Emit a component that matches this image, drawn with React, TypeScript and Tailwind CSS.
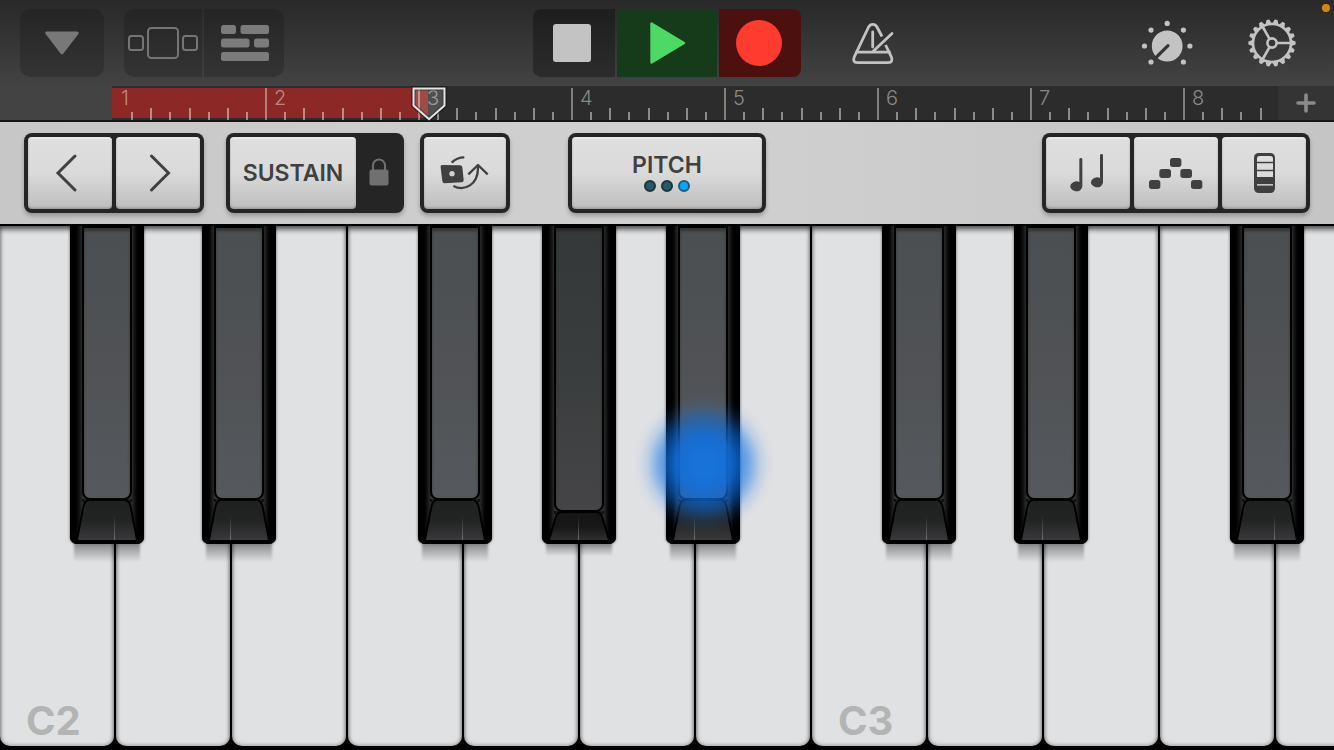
import type { ReactNode } from "react";
import clsx from "clsx";

type BlackKey = {
  label: string;
  position: string;
  seam: number;
  pressed?: boolean;
  touched?: boolean;
};

type PianoKey = {
  note: string;
  caption?: string;
  black?: BlackKey;
};

const bars = [1, 2, 3, 4, 5, 6, 7, 8];
const ticks = [0, 1, 2, 3, 4, 5, 6, 7];

const pianoKeys: PianoKey[] = [
  { note: "C2", caption: "C2", black: { label: "C#2", position: "left-[60%]", seam: 45 } },
  { note: "D2", black: { label: "D#2", position: "left-[74%]", seam: 29 } },
  { note: "E2" },
  { note: "F2", black: { label: "F#2", position: "left-[60%]", seam: 45 } },
  { note: "G2", black: { label: "G#2", position: "left-[67%]", seam: 37, pressed: true } },
  { note: "A2", black: { label: "A#2", position: "left-[74%]", seam: 29, touched: true } },
  { note: "B2" },
  { note: "C3", caption: "C3", black: { label: "C#3", position: "left-[60%]", seam: 45 } },
  { note: "D3", black: { label: "D#3", position: "left-[74%]", seam: 29 } },
  { note: "E3" },
  { note: "F3", black: { label: "F#3", position: "left-[60%]", seam: 45 } },
  { note: "G3" },
];

export default function App() {
  return (
    <div className="flex min-h-screen flex-col overflow-hidden bg-black font-['Inter','Liberation_Sans',sans-serif] select-none">
      <TopBar />
      <Ruler />
      <ControlBar />
      <Keyboard />
    </div>
  );
}

function TopBar() {
  return (
    <header className="relative grid grid-cols-[1fr_auto_1fr] items-center bg-linear-to-b from-[#292929] to-[#434343] py-[9px]">
      <div className="flex gap-5 pl-5">
        <button
          aria-label="Song menu"
          className="flex h-17 w-21 items-center justify-center rounded-[10px] bg-linear-to-b from-[#252525] to-[#343434]"
        >
          <svg width="36" height="26" viewBox="0 0 36 26" className="fill-[#787878] stroke-[#787878]">
            <path d="M2.8 3h30.4L18 22.8z" strokeWidth="3" strokeLinejoin="round" />
          </svg>
        </button>
        <div className="flex gap-0.5 overflow-hidden rounded-[10px]">
          <button
            aria-label="Browser"
            className="flex h-17 w-[78px] items-center justify-center bg-linear-to-b from-[#252525] to-[#343434]"
          >
            <svg width="70" height="32" viewBox="0 0 70 32" fill="none" className="stroke-[#757575]" strokeWidth="2">
              <rect x="1" y="9" width="14" height="14" rx="2.5" />
              <rect x="20" y="1" width="30" height="30" rx="3.5" />
              <rect x="55" y="9" width="14" height="14" rx="2.5" />
            </svg>
          </button>
          <button
            aria-label="Tracks"
            className="flex h-17 w-20 items-center justify-center bg-linear-to-b from-[#252525] to-[#343434]"
          >
            <svg width="50" height="36" viewBox="-2 0 50 36" className="fill-[#7b7b7b]">
              <rect width="15" height="9" rx="2.5" />
              <rect x="19.5" width="28.5" height="9" rx="2.5" />
              <rect y="13.5" width="28.5" height="9" rx="2.5" />
              <rect x="33" y="13.5" width="15" height="9" rx="2.5" />
              <rect y="27" width="48" height="9" rx="2.5" />
            </svg>
          </button>
        </div>
      </div>

      {/* Transport */}
      <div className="flex gap-0.5 overflow-hidden rounded-[8px]">
        <button
          aria-label="Stop"
          className="flex h-17 w-[82px] items-center justify-center bg-linear-to-b from-[#1e1e1e] to-[#2c2c2c]"
        >
          <span className="mr-1 size-[38px] rounded-[3px] bg-[#c3c3c3]" />
        </button>
        <button aria-label="Play" className="flex h-17 w-25 items-center justify-center bg-[#163b1b]">
          <svg width="38" height="44" viewBox="0 0 38 44" className="fill-[#4cd964] stroke-[#4cd964]">
            <path d="M3.5 2.5v39L36 22z" strokeWidth="2.4" strokeLinejoin="round" />
          </svg>
        </button>
        <button aria-label="Record" className="flex h-17 w-[82px] items-center justify-center bg-[#4c110f] pr-0.5">
          <span className="size-[46px] rounded-full bg-[#ff3b30]" />
        </button>
      </div>

      <div className="flex items-center pr-[37px] pl-[50px]">
        <button aria-label="Metronome">
          <MetronomeIcon />
        </button>
        <button aria-label="Track controls" className="mr-[54px] ml-auto">
          <KnobIcon />
        </button>
        <button aria-label="Settings">
          <GearIcon />
        </button>
      </div>

      {/* Microphone-in-use light */}
      <span className="absolute top-1 right-1 size-2 rounded-full bg-[#d6860f]" />
    </header>
  );
}

function MetronomeIcon() {
  return (
    <svg
      width="44"
      height="44"
      viewBox="0 0 44 44"
      fill="none"
      className="stroke-[#c3c3c3]"
      strokeWidth="2.8"
      strokeLinecap="round"
      strokeLinejoin="round"
    >
      <path
        strokeLinecap="butt"
        d="M31 15.5 26 6Q24.6 3.4 21.8 3.4T17.6 6L3.4 35.6Q1 41.6 6.4 41.6H37.2Q42.6 41.6 40.2 35.6L34.6 24"
      />
      <path d="M5.5 31.2H38.5M21.7 10.8V26M22 30.6 41 12.4" />
    </svg>
  );
}

function KnobIcon() {
  return (
    <svg width="52" height="48" viewBox="0 0 52 48" className="fill-[#c3c3c3]">
      <circle cx="26.2" cy="27" r="15.4" />
      <path d="M27 26.6 14.5 39" className="stroke-[#363636]" strokeWidth="3.2" strokeLinecap="round" />
      <circle cx="26.2" cy="4.4" r="2.6" />
      <circle cx="10" cy="11.1" r="2.6" />
      <circle cx="42.4" cy="11.1" r="2.6" />
      <circle cx="3.5" cy="27" r="2.6" />
      <circle cx="48.9" cy="27" r="2.6" />
      <circle cx="10" cy="43" r="2.6" />
      <circle cx="42.4" cy="43" r="2.6" />
    </svg>
  );
}

function GearIcon() {
  const teeth = Array.from({ length: 18 }, (_, i) => i * 20);
  return (
    <svg width="50" height="50" viewBox="-25 -25 50 50" fill="none" className="stroke-[#c3c3c3]" strokeWidth="2.6">
      <circle r="19" />
      <circle r="4.6" />
      <path d="M5 0H19M-2.6 -4.4-9.5 -16.5M-2.6 4.4-9.5 16.5" />
      {teeth.map((angle) => (
        <path
          key={angle}
          d="M19.6 -3 23.6 -1.4V1.4L19.6 3z"
          transform={`rotate(${angle})`}
          className="fill-[#c3c3c3] stroke-none"
        />
      ))}
    </svg>
  );
}

function Ruler() {
  return (
    <div className="flex h-9 border-b-2 border-[#161616] bg-[#434343] pl-28">
      <div className="relative min-w-0 flex-1 bg-[#2c2c2c]">
        <div className="absolute top-0.5 left-0 h-[30px] w-[316px] bg-[#8c2825]" />
        <div className="relative flex h-full overflow-hidden pt-0.5">
          {bars.map((bar) => (
            <div key={bar} className="relative flex w-[153px] shrink-0 items-end">
              <span className="absolute -top-0.5 left-[9px] text-xl leading-6 font-light text-white/45">{bar}</span>
              {ticks.map((tick) => (
                <span key={tick} className="flex h-full flex-1 items-end">
                  <span
                    className={clsx(
                      "w-0.5",
                      tick === 0 && bar > 1 && "h-full bg-white/40",
                      tick % 2 === 1 && "h-2 bg-white/45",
                      tick > 0 && tick % 2 === 0 && "h-3 bg-white/45",
                    )}
                  />
                </span>
              ))}
            </div>
          ))}
        </div>
        {/* Playhead */}
        <svg width="38" height="36" viewBox="0 0 38 36" className="absolute top-0 left-[298px]">
          <path d="M3.5 2.5h31v17L19 33.2 3.5 19.5z" fill="none" stroke="#111" strokeOpacity=".6" strokeWidth="4.5" />
          <path d="M3.5 2.5h31v17L19 33.2 3.5 19.5z" fill="#fff" fillOpacity=".17" stroke="#e4e4e4" strokeWidth="2" />
        </svg>
      </div>
      <button aria-label="Song sections" className="flex w-14 items-center justify-center bg-[#343434]">
        <svg width="20" height="20" viewBox="0 0 20 20" className="stroke-[#8a8a8a]" strokeWidth="3.6" strokeLinecap="round">
          <path d="M10 2v16M2 10h16" />
        </svg>
      </button>
    </div>
  );
}

function ButtonFrame({ children }: { children: ReactNode }) {
  return (
    <div className="flex gap-1 rounded-[8px] bg-[#252525] p-1 shadow-[0_3px_4px_rgba(0,0,0,0.25)]">{children}</div>
  );
}

function CapButton({ label, width, children }: { label?: string; width: string; children: ReactNode }) {
  return (
    <button
      aria-label={label}
      className={clsx(
        "flex h-18 flex-col items-center justify-center gap-1 rounded-[4px] bg-linear-to-b from-[#dfdfdf] via-[#dadada] to-[#bebebe] text-[23px] leading-[22px] font-semibold text-[#404040] shadow-[inset_0_2px_1px_rgba(255,255,255,0.45),inset_0_-2px_2px_rgba(0,0,0,0.12),inset_0_0_2px_rgba(0,0,0,0.2)]",
        width,
      )}
    >
      {children}
    </button>
  );
}

function ControlBar() {
  return (
    <div className="flex items-center bg-linear-to-r from-[#c7c7c7] via-[#d1d1d1] to-[#c5c5c5] py-[11px]">
      <div className="flex flex-1 pl-6">
        <ButtonFrame>
          <CapButton label="Octave down" width="w-21">
            <svg width="32" height="40" viewBox="0 0 32 40" fill="none" stroke="currentColor" strokeWidth="3">
              <path d="M21 3 4 20l17 17" strokeLinecap="round" />
            </svg>
          </CapButton>
          <CapButton label="Octave up" width="w-21">
            <svg width="32" height="40" viewBox="0 0 32 40" fill="none" stroke="currentColor" strokeWidth="3">
              <path d="M9.500 3 26.500 20l-17 17" strokeLinecap="round" />
            </svg>
          </CapButton>
        </ButtonFrame>

        <div className="mr-4 ml-[22px]">
          <ButtonFrame>
            <CapButton width="w-[126px]">SUSTAIN</CapButton>
            <button aria-label="Lock sustain" className="flex w-10 items-center justify-center pr-0.5 pb-0.5">
              <svg width="20" height="28" viewBox="0 0 20 28" className="fill-[#707070]">
                <rect x=".5" y="11.500" width="19" height="16" rx="2" />
                <path d="M4 12V7.500a6 6 0 0 1 12 0V12" fill="none" className="stroke-[#707070]" strokeWidth="2" />
              </svg>
            </button>
          </ButtonFrame>
        </div>

        <ButtonFrame>
          <CapButton label="Swap controls" width="w-[82px]">
            <svg width="50" height="36" viewBox="6 3 150 108" fill="none" stroke="currentColor" strokeWidth="7">
              <path
                d="M12 33 66 34Q72 34 73 40L77 78Q77 85 71 85L20 88Q14 88 13 82L8 40Q7 33 12 33z"
                fill="currentColor"
                stroke="none"
              />
              <circle cx="42" cy="59" r="8" fill="#d2d2d2" stroke="none" />
              <path d="M41 26Q56 10 79 10" />
              <path d="M46 96C78 112 122 95 120 36" />
              <path d="M91 61 120 33 149 61" strokeLinejoin="round" />
            </svg>
          </CapButton>
        </ButtonFrame>
      </div>

      <ButtonFrame>
        <CapButton width="w-[190px]">
          PITCH
          <span className="flex gap-[5px]">
            <span className="size-3 rounded-full border-2 border-[#1d333b] bg-[#25596a]" />
            <span className="size-3 rounded-full border-2 border-[#1d333b] bg-[#25596a]" />
            <span className="size-3 rounded-full border-2 border-[#205a7c] bg-[#00a9ff]" />
          </span>
        </CapButton>
      </ButtonFrame>

      <div className="flex flex-1 justify-end pr-6">
        <ButtonFrame>
          <CapButton label="Scale" width="w-21">
            <svg width="40" height="40" viewBox="0 0 120 120" fill="currentColor">
              <path d="M43 18V100A18 15 0 1 1 34 87V18Q35 15 38.500 15T43 18z" />
              <path d="M105 6V88A18 15 0 1 1 96 75V6Q97 3 100.500 3T105 6z" />
            </svg>
          </CapButton>
          <CapButton label="Arpeggiator" width="w-21">
            <svg width="56" height="38" viewBox="0 0 168 114" fill="currentColor">
              <rect x="66" y="12" width="34" height="27" rx="8" />
              <rect x="34" y="45" width="35" height="27" rx="8" />
              <rect x="97" y="45" width="35" height="27" rx="8" />
              <rect x="3" y="78" width="34" height="27" rx="8" />
              <rect x="129" y="78" width="34" height="27" rx="8" />
            </svg>
          </CapButton>
          <CapButton label="Keyboard layout" width="w-21">
            <svg width="24" height="42" viewBox="0 0 72 126">
              <rect x="6" y="3" width="63" height="120" rx="14" fill="currentColor" />
              <path d="M15 29V20Q15 12 23 12H55Q63 12 63 20V29z" fill="#e0e0e0" />
              <path d="M15 34H63V53H15zM15 58H63V75H15z" fill="#dcdcdc" />
              <path d="M15 96H63V101H15z" fill="#c4c4c4" />
            </svg>
          </CapButton>
        </ButtonFrame>
      </div>
    </div>
  );
}

function Keyboard() {
  return (
    <main className="flex flex-1 overflow-hidden bg-black pt-0.5 pb-1">
      {pianoKeys.map(({ note, caption, black }) => (
        <div key={note} className="relative flex shrink-0 basis-[calc(100%/11.5)] pr-0.5">
          <button
            aria-label={note}
            className="flex flex-1 items-end rounded-b-[10px] bg-[#e0e1e3] pb-1 pl-[26px] text-[40px] leading-[42px] font-bold text-[#b3b5b4] shadow-[inset_0_5px_5px_-1px_rgba(0,0,0,0.5),inset_0_0_4px_rgba(0,0,0,0.45)]"
          >
            {caption}
          </button>
          {black && <BlackKeyButton {...black} />}
        </div>
      ))}
    </main>
  );
}

function BlackKeyButton({ label, position, seam, pressed, touched }: BlackKey) {
  const depth = pressed ? 33 : 45;
  return (
    <div className={clsx("absolute top-0 z-10 w-[74px]", position)}>
      <button
        aria-label={label}
        className="relative z-10 flex h-[318px] w-full flex-col items-center rounded-b-[7px] bg-black shadow-[0_0_3px_rgba(0,0,0,0.6)]"
      >
        {/* Side bevels */}
        <span className="absolute inset-y-0 left-0 w-5 rounded-bl-[7px] bg-linear-to-r from-black from-[4px] to-[#3a3a3a] to-[14px]" />
        <span className="absolute inset-y-0 right-0 w-5 rounded-br-[7px] bg-linear-to-l from-black from-[4px] to-[#3a3a3a] to-[14px]" />
        <span
          className={clsx(
            "relative w-[50px] flex-1 rounded-b-[8px] border-2 border-black bg-linear-to-b shadow-[inset_0_3px_3px_rgba(0,0,0,0.35)]",
            pressed ? "from-[#353838] via-[#3a3d3d] to-[#454547]" : "from-[#4b4f51] via-[#505255] to-[#55595d]",
          )}
        />
        <svg width="74" height={depth} viewBox={`0 0 74 ${depth}`} className="relative -mt-px">
          <defs>
            <linearGradient id={`front-${label}`} x1="0" y1="0" x2="0" y2="1">
              <stop offset="0" stopColor={pressed ? "#151515" : "#1f2020"} />
              <stop offset=".5" stopColor={pressed ? "#171717" : "#222323"} />
              <stop offset="1" stopColor={pressed ? "#303030" : "#3a3a3d"} />
            </linearGradient>
            <linearGradient id={`seam-${label}`} x1="0" y1="0" x2="0" y2="1">
              <stop offset="0" stopColor="#aaa" stopOpacity="0" />
              <stop offset="1" stopColor="#aaa" stopOpacity=".5" />
            </linearGradient>
          </defs>
          <path d={`M6 ${depth - 4}H68V${depth}H6z`} />
          <circle cx="15" cy="1" r="2.4" fill="#1c1c1c" stroke="#000" />
          <circle cx="59" cy="1" r="2.4" fill="#1c1c1c" stroke="#000" />
          <path
            d={`M20 1H54Q59 1 60.500 7L67 ${depth - 4}Q67 ${depth - 3} 66 ${depth - 3}H8Q7 ${depth - 3} 7 ${depth - 4}L13.500 7Q15 1 20 1z`}
            fill={`url(#front-${label})`}
            stroke="#000"
            strokeWidth="2"
          />
          <rect x={seam - 1} y={depth - 29} width="1" height="25" fill={`url(#seam-${label})`} />
        </svg>
      </button>
      {/* Cast shadow */}
      <span
        className={clsx(
          "absolute inset-x-1 top-full bg-linear-to-b from-[#00000060] to-transparent blur-[1px]",
          pressed ? "h-3" : "h-[18px]",
        )}
      />
      {touched && (
        <span className="pointer-events-none absolute bottom-2 -left-[34px] z-20 size-36 rounded-full bg-[radial-gradient(closest-side,rgba(20,116,224,0.95)_15%,rgba(14,112,226,0.85)_40%,rgba(10,112,232,0.5)_62%,rgba(30,125,240,0.18)_78%,rgba(30,125,240,0.04)_90%,transparent)]" />
      )}
    </div>
  );
}
